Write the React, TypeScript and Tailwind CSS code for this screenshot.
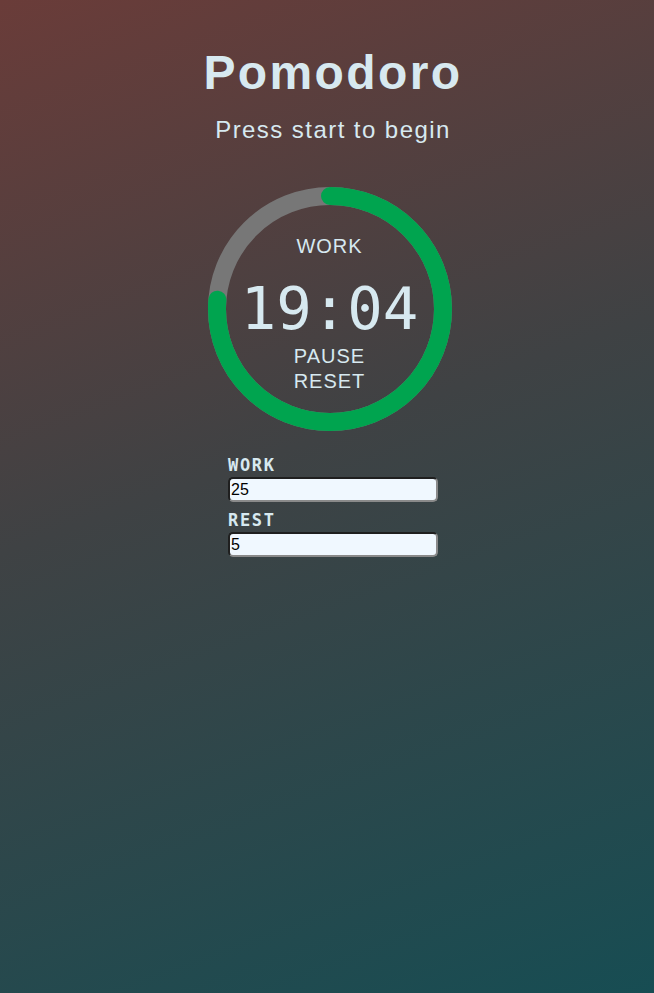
import { useState } from "react";

const R = 113;
const C = 2 * Math.PI * R;

export default function App() {
  const [work, setWork] = useState("25");
  const [rest, setRest] = useState("5");
  const progress = 1144 / 1500;

  return (
    <div className="min-h-screen w-full bg-[linear-gradient(160deg,#6a3c39_0%,#3f4244_45%,#174d53_100%)] text-[#d7e9f0] font-['Liberation_Sans',Arial,sans-serif]">
      <div className="flex flex-col items-center pl-3 pt-[49px]">
        <h1 className="text-[48px] leading-none font-bold tracking-[0.05em]">Pomodoro</h1>
        <p className="mt-[21px] text-[24px] leading-none tracking-[0.06em]">Press start to begin</p>

        {/* Timer ring */}
        <div className="relative mt-[45px] mr-[7px] h-[244px] w-[244px]">
          <svg width="244" height="244" viewBox="0 0 244 244" className="absolute inset-0">
            <circle cx="122" cy="122" r={R} fill="none" stroke="#777777" strokeWidth="18" />
            <circle
              cx="122"
              cy="122"
              r={R}
              fill="none"
              stroke="#00a44f"
              strokeWidth="18"
              strokeLinecap="round"
              strokeDasharray={`${C * progress} ${C}`}
              transform="rotate(-90 122 122)"
            />
          </svg>
          <div className="absolute inset-0 flex flex-col items-center pt-[47px]">
            <span className="text-[20px] leading-[24px] tracking-[0.05em]">WORK</span>
            <span className="mt-[21px] font-['DejaVu_Sans_Mono',monospace] text-[59px] leading-[60px]">19:04</span>
            <button className="mt-[5px] text-[20px] leading-[25px] tracking-[0.05em]">PAUSE</button>
            <button className="text-[20px] leading-[24px] tracking-[0.05em]">RESET</button>
          </div>
        </div>

        {/* Settings */}
        <div className="mt-[24px] flex w-[210px] flex-col">
          <label className="font-['DejaVu_Sans_Mono',monospace] text-[17px] leading-[20px] font-semibold tracking-[0.1em]">WORK</label>
          <input
            value={work}
            onChange={(e) => setWork(e.target.value)}
            className="mt-[2px] h-[25px] w-full rounded-[5px] border-2 border-t-[#1f1f1f] border-l-[#1f1f1f] border-r-[#8a8a8a] border-b-[#8a8a8a] bg-[#f0f8ff] px-[1px] text-[16px] text-black outline-none"
          />
          <label className="mt-[8px] font-['DejaVu_Sans_Mono',monospace] text-[17px] leading-[20px] font-semibold tracking-[0.1em]">REST</label>
          <input
            value={rest}
            onChange={(e) => setRest(e.target.value)}
            className="mt-[2px] h-[25px] w-full rounded-[5px] border-2 border-t-[#1f1f1f] border-l-[#1f1f1f] border-r-[#8a8a8a] border-b-[#8a8a8a] bg-[#f0f8ff] px-[1px] text-[16px] text-black outline-none"
          />
        </div>
      </div>
    </div>
  );
}
